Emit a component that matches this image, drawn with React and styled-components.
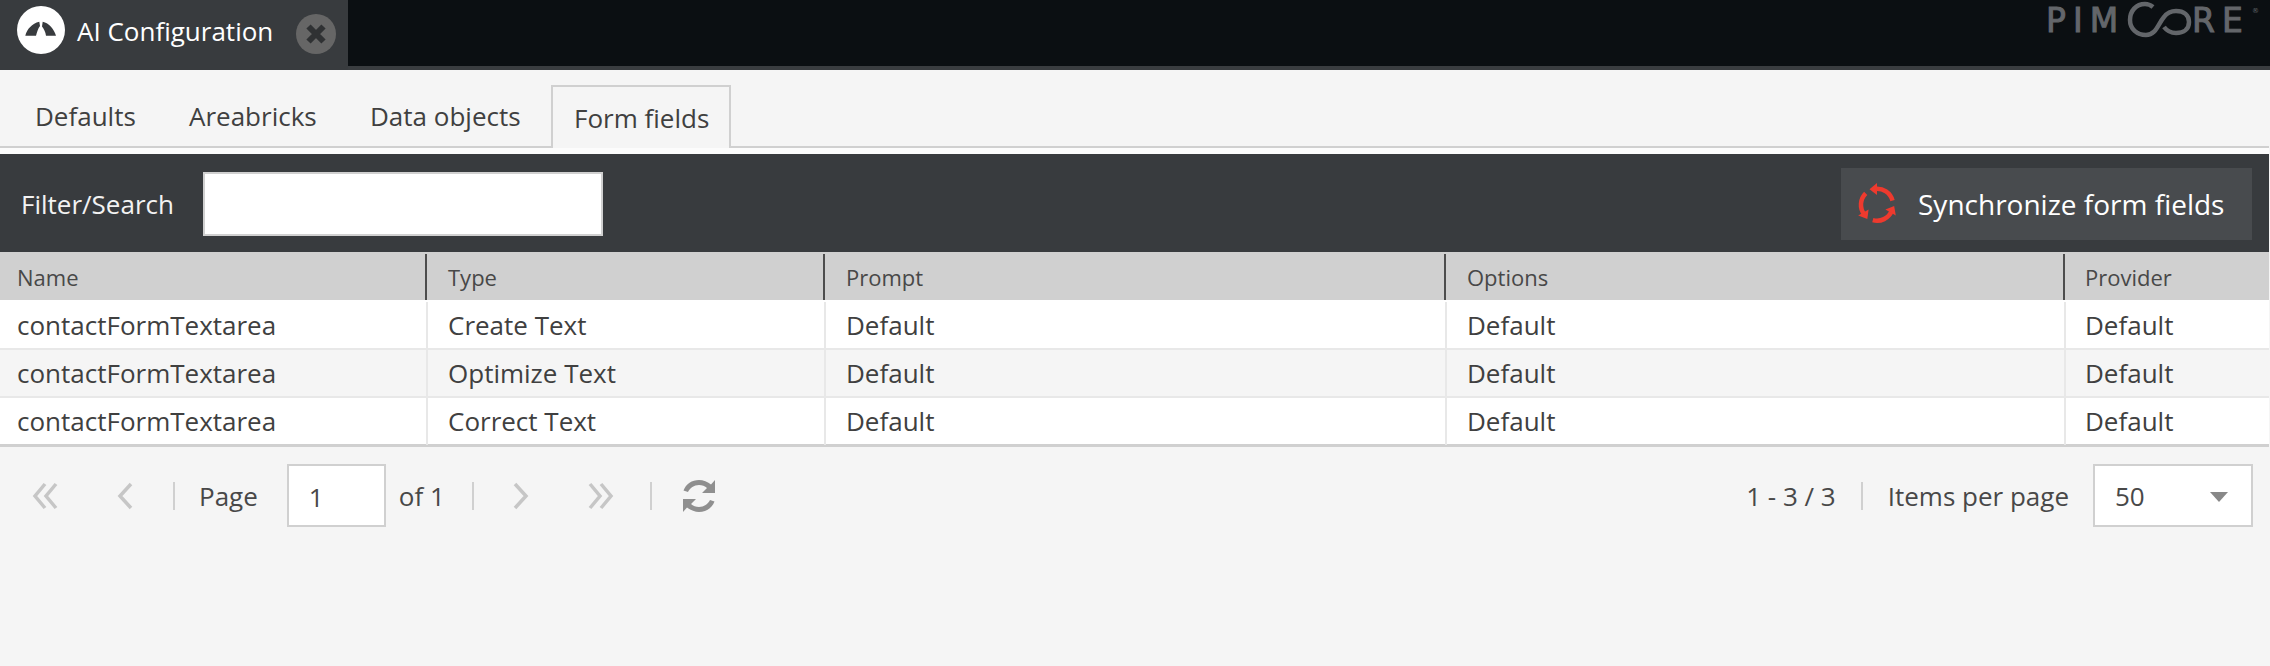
import React from "react";
import styled, { createGlobalStyle } from "styled-components";

const Global = createGlobalStyle`
  html, body { margin: 0; padding: 0; background: #f5f5f5; }
  body { font-family: "Open Sans", "Liberation Sans", sans-serif; color: #404040; }
`;

const Page = styled.div`
  width: 2270px;
  height: 666px;
  overflow: hidden;
  display: flex;
  flex-direction: column;
`;

// top bar
const TopBar = styled.div`
  height: 66px;
  flex: none;
  background: #0b0f12;
  border-bottom: 4px solid #3a3d40;
  display: flex;
  justify-content: space-between;
`;
const AppTab = styled.div`
  width: 348px;
  height: 70px;
  background: #383b3e;
  display: flex;
  align-items: flex-start;
  color: #fff;
  font-size: 26px;
`;
const AppIcon = styled.svg`
  width: 48px;
  height: 48px;
  margin: 6px 0 0 17px;
  flex: none;
`;
const AppTitle = styled.span`
  margin: 12px 0 0 12px;
  line-height: 38px;
  width: 208px;
  flex: none;
`;
const CloseBtn = styled.svg`
  width: 40px;
  height: 40px;
  margin: 14px 0 0 11px;
  flex: none;
`;
const Logo = styled.div`
  display: flex;
  align-items: flex-start;
  height: 44px;
  margin-right: 12px;
  color: #63666a;
  font-family: "DejaVu Sans", sans-serif;
`;
const LogoWord = styled.span`
  font-size: 33px;
  line-height: 38px;
  margin-top: 2px;
  width: ${(p) => p.$w}px;
  letter-spacing: 7px;
  white-space: nowrap;
  -webkit-text-stroke: 1px #63666a;
`;
const LogoMark = styled.svg`
  width: 66px;
  height: 40px;
  flex: none;
  margin-left: 3px;
`;
const Registered = styled.span`
  font-size: 7px;
  line-height: 10px;
  width: 6px;
  margin-top: 6px;
`;

// tabs
const Main = styled.div`
  flex: 1;
  margin-right: 1px;
  display: flex;
  flex-direction: column;
`;
const TabStrip = styled.div`
  height: 62px;
  padding: 14px 0 0 0;
  box-sizing: content-box;
  border-bottom: 2px solid #d0d0d0;
  display: flex;
  align-items: flex-end;
  font-size: 26px;
`;
const Tab = styled.div`
  box-sizing: border-box;
  height: ${(p) => (p.$active ? "63px" : "62px")};
  width: ${(p) => p.$w}px;
  padding-left: ${(p) => p.$pad}px;
  line-height: 64px;
  margin-bottom: ${(p) => (p.$active ? "-2px" : "0")};
  ${(p) =>
    p.$active
      ? "border: 2px solid #d0d0d0; border-bottom: 0; background: #f5f5f5; line-height: 62px;"
      : ""}
`;
const Gap = styled.div`
  height: 6px;
  background: #fcfcfc;
`;

// toolbar
const Toolbar = styled.div`
  height: 98px;
  box-sizing: border-box;
  background: #383b3e;
  display: flex;
  align-items: center;
  justify-content: space-between;
  padding: 2px 17px 0 21px;
  color: #fff;
`;
const FilterGroup = styled.div`
  display: flex;
  align-items: center;
  font-size: 26px;
  color: #f2f2f2;
`;
const FilterLabel = styled.span`
  width: 182px;
`;
const FilterInput = styled.div`
  box-sizing: border-box;
  width: 400px;
  height: 64px;
  background: #fff;
  border: 2px solid #d0d0d0;
`;
const SyncButton = styled.div`
  box-sizing: border-box;
  width: 411px;
  height: 72px;
  background: #484b4e;
  display: flex;
  align-items: center;
  padding-left: 17px;
  gap: 20px;
  font-size: 28px;
`;
const SyncIcon = styled.svg`
  width: 40px;
  height: 42px;
  flex: none;
`;

// grid
const columns = "427px 398px 621px 619px 1fr";
const HeaderRow = styled.div`
  display: grid;
  grid-template-columns: ${columns};
  height: 48px;
  background: #d0d0d0;
  font-size: 22px;
  color: #484848;
`;
const HeaderCell = styled.div`
  line-height: 51px;
  padding-left: ${(p) => (p.$first ? 17 : p.$last ? 20 : 21)}px;
  position: relative;
  &::after {
    content: "";
    display: ${(p) => (p.$last ? "none" : "block")};
    position: absolute;
    right: 0;
    top: 2px;
    bottom: 3px;
    width: 2px;
    background: #4d4d4d;
  }
`;
const Row = styled.div`
  display: grid;
  grid-template-columns: ${columns};
  height: ${(p) => p.$h}px;
  box-sizing: border-box;
  background: ${(p) => (p.$alt ? "#f5f5f5" : "#fff")};
  border-bottom: ${(p) => p.$border}px solid ${(p) => (p.$last ? "#d0d0d0" : "#e8e8e8")};
  font-size: 26px;
  color: #404040;
`;
const Cell = styled.div`
  line-height: 47px;
  padding-left: ${(p) => (p.$first ? 17 : p.$last ? 20 : 21)}px;
  margin-top: ${(p) => p.$top}px;
  border-right: ${(p) => (p.$last ? "none" : "2px solid #e8e8e8")};
  margin-right: -1px;
`;

// paging
const Pager = styled.div`
  height: 63px;
  margin-top: 17px;
  display: flex;
  align-items: center;
  justify-content: space-between;
  padding: 0 16px 0 0;
  font-size: 26px;
  color: #484848;
`;
const PagerGroup = styled.div`
  display: flex;
  align-items: center;
`;
const PagerIcon = styled.svg`
  width: ${(p) => p.$w}px;
  height: 30px;
  flex: none;
  margin-left: ${(p) => p.$ml}px;
  fill: none;
  stroke: #c6c6c6;
  stroke-width: 3.5;
`;
const Sep = styled.div`
  width: 2px;
  height: 28px;
  background: #d0d0d0;
  flex: none;
  margin-left: ${(p) => p.$ml}px;
`;
const PagerText = styled.span`
  margin-left: ${(p) => p.$ml}px;
`;
const PageBox = styled.div`
  box-sizing: border-box;
  width: 99px;
  height: 63px;
  border: 2px solid #d0d0d0;
  background: #fff;
  padding-left: 20px;
  line-height: 62px;
  margin-left: ${(p) => p.$ml}px;
`;
const SizeSelect = styled(PageBox)`
  width: 160px;
  display: flex;
  justify-content: space-between;
  align-items: center;
  padding: 0 23px 0 20px;
`;
const SelectArrow = styled.div`
  width: 0;
  height: 0;
  margin-top: 3px;
  border-left: 9.5px solid transparent;
  border-right: 9.5px solid transparent;
  border-top: 10px solid #888;
`;
const RefreshIcon = styled.svg`
  width: 34px;
  height: 34px;
  flex: none;
  margin-left: ${(p) => p.$ml}px;
  fill: #8f8f8f;
`;

const rows = [
  ["contactFormTextarea", "Create Text"],
  ["contactFormTextarea", "Optimize Text"],
  ["contactFormTextarea", "Correct Text"],
];
const heads = ["Name", "Type", "Prompt", "Options", "Provider"];
const rowGeom = [
  { h: 50, border: 2, top: 2 },
  { h: 48, border: 2, top: 0 },
  { h: 49, border: 3, top: 0 },
];

export default function App() {
  return (
    <Page>
      <Global />
      <TopBar>
        <AppTab>
          <AppIcon viewBox="0 0 48 48">
            <circle cx="24" cy="24" r="24" fill="#fff" />
            <path d="M8.300 29.700 C10 23 15 17.500 22.300 15.700 L23 20 C21 22.500 20 26 19 29.700 Z" fill="#383b3e" />
            <path d="M25.700 15.700 C32 17 37 23 39 29.700 L29 29.700 C28.500 26 27 23 25 20.500 Z" fill="#383b3e" />
          </AppIcon>
          <AppTitle>AI Configuration</AppTitle>
          <CloseBtn viewBox="0 0 40 40">
            <circle cx="20" cy="20" r="20" fill="#666" />
            <path d="M12.500 12.500 L27.500 27.500 M27.500 12.500 L12.500 27.500" stroke="#2f3133" strokeWidth="6" />
          </CloseBtn>
        </AppTab>
        <Logo>
          <LogoWord $w={77}>PIM</LogoWord>
          <LogoMark viewBox="0 0 66 40">
            <path
              d="M27 7 C24 4.500 21 4 19 4 C10 4 4 11 4 20 C4 29 11 35 20 35 C30 35 32 24 38 17 C41 13 45 11 50 11 C58 11 63 15 63 22 C63 29 58 33 50 33 C45 33 41 31 38 27"
              fill="none"
              stroke="#63666a"
              strokeWidth="4.500"
            />
          </LogoMark>
          <LogoWord $w={60}>RE</LogoWord>
          <Registered>®</Registered>
        </Logo>
      </TopBar>
      <Main>
        <TabStrip>
          <Tab $w={171} $pad={35}>Defaults</Tab>
          <Tab $w={181} $pad={18}>Areabricks</Tab>
          <Tab $w={199} $pad={18}>Data objects</Tab>
          <Tab $w={180} $pad={21} $active>Form fields</Tab>
        </TabStrip>
        <Gap />
        <Toolbar>
          <FilterGroup>
            <FilterLabel>Filter/Search</FilterLabel>
            <FilterInput />
          </FilterGroup>
          <SyncButton>
            <SyncIcon viewBox="0 0 40 42" fill="none" stroke="#ee3a2e" strokeWidth="4.500">
              {[0, 120, 240].map((a) => (
                <g key={a} transform={`rotate(${a} 19 21.700)`}>
                  <path d="M34.500 17.600 A16 16 0 0 0 17 5.800" />
                  <path d="M11.500 6.200 L19 0 L19 12 Z" fill="#ee3a2e" stroke="none" />
                </g>
              ))}
            </SyncIcon>
            <span>Synchronize form fields</span>
          </SyncButton>
        </Toolbar>
        <HeaderRow>
          {heads.map((h, i) => (
            <HeaderCell key={h} $first={i === 0} $last={i === 4}>{h}</HeaderCell>
          ))}
        </HeaderRow>
        {rows.map((r, i) => (
          <Row key={i} $alt={i === 1} $last={i === 2} $h={rowGeom[i].h} $border={rowGeom[i].border}>
            {[r[0], r[1], "Default", "Default", "Default"].map((c, j) => (
              <Cell key={j} $first={j === 0} $last={j === 4} $top={rowGeom[i].top}>{c}</Cell>
            ))}
          </Row>
        ))}
        <Pager>
          <PagerGroup>
            <PagerIcon $w={26} $ml={32} viewBox="0 0 26 30">
              <path d="M13 3 L3 15 L13 27 M24 3 L14 15 L24 27" />
            </PagerIcon>
            <PagerIcon $w={16} $ml={59} viewBox="0 0 16 30">
              <path d="M14 3 L3 15 L14 27" />
            </PagerIcon>
            <Sep $ml={40} />
            <PagerText $ml={24}>Page</PagerText>
            <PageBox $ml={29}>1</PageBox>
            <PagerText $ml={13}>of 1</PagerText>
            <Sep $ml={27} />
            <PagerIcon $w={16} $ml={39} viewBox="0 0 16 30">
              <path d="M2 3 L13 15 L2 27" />
            </PagerIcon>
            <PagerIcon $w={26} $ml={59} viewBox="0 0 26 30">
              <path d="M2 3 L12 15 L2 27 M13 3 L23 15 L13 27" />
            </PagerIcon>
            <Sep $ml={36} />
            <RefreshIcon $ml={30} viewBox="0 0 34 34">
              <path d="M33 1 V14 H20 L25 9 C23 7 20 6 17 6 C12 6 8 9 6 13 L1.500 11.500 C4 5 10 1 17 1 C21 1 26 3 29 5.500 Z" />
              <path d="M1 33 V20 H14 L9 25 C11 27 14 28 17 28 C22 28 26 25 28 21 L32.500 22.500 C30 29 24 33 17 33 C13 33 8 31 5 28.500 Z" />
            </RefreshIcon>
          </PagerGroup>
          <PagerGroup>
            <span>1 - 3 / 3</span>
            <Sep $ml={25} />
            <PagerText $ml={25}>Items per page</PagerText>
            <SizeSelect $ml={24}>
              <span>50</span>
              <SelectArrow />
            </SizeSelect>
          </PagerGroup>
        </Pager>
      </Main>
    </Page>
  );
}
